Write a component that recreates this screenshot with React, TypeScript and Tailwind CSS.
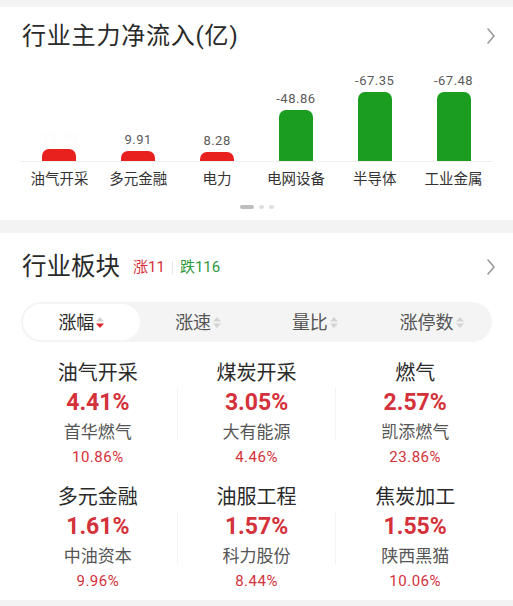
import React from 'react';

const font = { fontFamily: 'Roboto, "Noto Sans CJK SC", sans-serif' };

interface Flow {
  name: string;
  value: string;
  height: number;
  up: boolean;
  hideValue?: boolean;
}

const flows: Flow[] = [
  { name: '油气开采', value: '12.30', height: 12, up: true, hideValue: true },
  { name: '多元金融', value: '9.91', height: 10, up: true },
  { name: '电力', value: '8.28', height: 9, up: true },
  { name: '电网设备', value: '-48.86', height: 51, up: false },
  { name: '半导体', value: '-67.35', height: 69, up: false },
  { name: '工业金属', value: '-67.48', height: 69, up: false },
];

interface Sector {
  name: string;
  pct: string;
  stock: string;
  stockPct: string;
}

const rows: Sector[][] = [
  [
    { name: '油气开采', pct: '4.41%', stock: '首华燃气', stockPct: '10.86%' },
    { name: '煤炭开采', pct: '3.05%', stock: '大有能源', stockPct: '4.46%' },
    { name: '燃气', pct: '2.57%', stock: '凯添燃气', stockPct: '23.86%' },
  ],
  [
    { name: '多元金融', pct: '1.61%', stock: '中油资本', stockPct: '9.96%' },
    { name: '油服工程', pct: '1.57%', stock: '科力股份', stockPct: '8.44%' },
    { name: '焦炭加工', pct: '1.55%', stock: '陕西黑猫', stockPct: '10.06%' },
  ],
];

const tabs = ['涨幅', '涨速', '量比', '涨停数'];

const Chevron = () => (
  <svg width="10" height="18" viewBox="0 0 10 18" fill="none">
    <polyline points="2,2 8,9 2,16" stroke="#9a9a9a" strokeWidth="1.6" strokeLinecap="round" strokeLinejoin="round" />
  </svg>
);

const SortArrow = ({ active }: { active: boolean }) => (
  <svg width="8" height="11" viewBox="0 0 8 11" className="ml-[2px]">
    <polygon points="4,0 8,4.5 0,4.5" fill="#d4d4d4" />
    <polygon points="0,6.5 8,6.5 4,11" fill={active ? '#d9262c' : '#d4d4d4'} />
  </svg>
);

export default function App() {
  return (
    <div className="w-[513px] h-[606px] bg-[#f3f3f3] pt-[7px] overflow-hidden" style={font}>
      {/* 行业主力净流入 */}
      <div className="bg-white h-[213px] pt-[13px]">
        <div className="flex items-center justify-between pl-[22px] pr-[17px] h-[32px]">
          <span className="text-[24px] leading-[32px] tracking-[0.8px] text-[#2a2a2a]">行业主力净流入(亿)</span>
          <Chevron />
        </div>
        <div className="mx-[20px] border-b border-[#efefef]">
          <div className="flex h-[109px] items-end">
            {flows.map(f => (
              <div key={f.name} className="flex-1 flex flex-col items-center justify-end">
                <span
                  className={`text-[13px] leading-[14px] mb-[4px] tracking-[0.5px] ${f.hideValue ? 'text-[#fcfcfc]' : 'text-[#5a5a5a]'}`}
                >
                  {f.value}
                </span>
                <div
                  className={`w-[34px] rounded-t-[7px] ${f.up ? 'bg-[#e8211f]' : 'bg-[#1b9e20]'}`}
                  style={{ height: f.height }}
                />
              </div>
            ))}
          </div>
        </div>
        <div className="flex mx-[20px] mt-[9px]">
          {flows.map(f => (
            <div key={f.name} className="flex-1 text-center text-[14.5px] leading-[18px] text-[#333]">
              {f.name}
            </div>
          ))}
        </div>
        <div className="flex justify-center items-center gap-[5px] mt-[16px]">
          <div className="w-[14px] h-[4px] rounded-full bg-[#bdbdbd]" />
          <div className="w-[5px] h-[4px] rounded-full bg-[#e0e0e0]" />
          <div className="w-[5px] h-[4px] rounded-full bg-[#e0e0e0]" />
        </div>
      </div>

      {/* 行业板块 */}
      <div className="bg-white mt-[13px] h-[367px] pt-[18px]">
        <div className="flex items-center justify-between pl-[22px] pr-[17px] h-[32px]">
          <div className="flex items-center">
            <span className="text-[24.5px] leading-[32px] text-[#2a2a2a]">行业板块</span>
            <span className="ml-[13px] text-[15px] text-[#d4313a]">涨11</span>
            <span className="mx-[7px] w-px h-[13px] bg-[#e6e6e6]" />
            <span className="text-[15px] text-[#2e9a3c]">跌116</span>
          </div>
          <Chevron />
        </div>

        <div className="mx-[21px] mt-[19px] h-[40px] rounded-full bg-[#f4f4f4] p-[2px] flex">
          {tabs.map((t, i) => (
            <div
              key={t}
              className={`flex-1 flex items-center justify-center rounded-full text-[18px] ${
                i === 0 ? 'bg-white text-[#2a2a2a]' : 'text-[#555]'
              }`}
            >
              <span>{t}</span>
              <SortArrow active={i === 0} />
            </div>
          ))}
        </div>

        <div className="mx-[19px] mt-[18px] flex flex-col gap-[16px]">
          {rows.map((row, ri) => (
            <div key={ri} className="flex">
              {row.map((s, ci) => (
                <React.Fragment key={s.name}>
                  {ci > 0 && <div className="w-px self-center h-[52px] bg-[#f3f3f3]" />}
                  <div className="flex-1 flex flex-col items-center">
                    <span className="text-[20px] leading-[26px] text-[#2a2a2a]">{s.name}</span>
                    <span className="mt-[3px] text-[23px] leading-[28px] font-bold text-[#d4313a]">{s.pct}</span>
                    <span className="mt-[3px] text-[17px] leading-[24px] text-[#555]">{s.stock}</span>
                    <span className="mt-[2px] text-[15px] leading-[22px] text-[#d4313a] tracking-[0.5px]">{s.stockPct}</span>
                  </div>
                </React.Fragment>
              ))}
            </div>
          ))}
        </div>
      </div>
    </div>
  );
}
